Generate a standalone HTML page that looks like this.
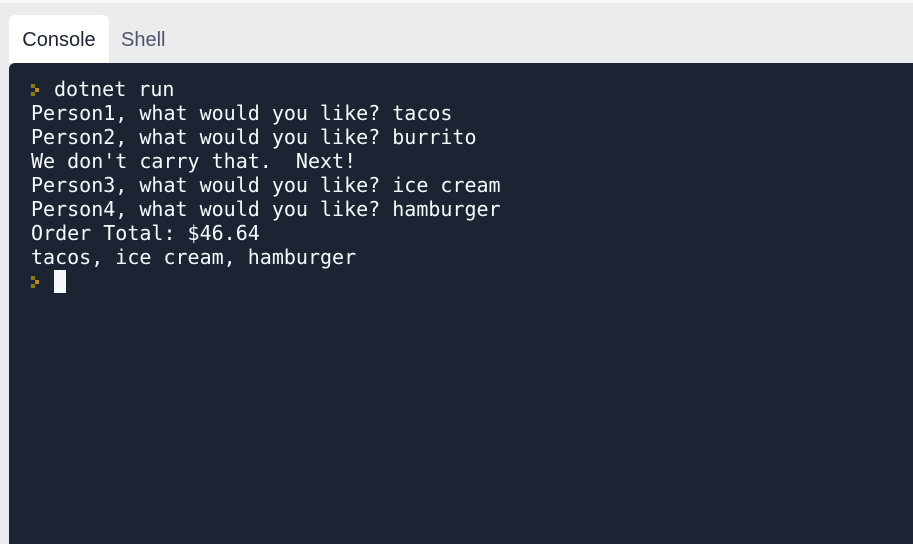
<!DOCTYPE html>
<html><head><style>
html,body{margin:0;padding:0;width:913px;height:544px;overflow:hidden;background:#ebecee;}
.top{position:absolute;left:0;top:0;width:913px;height:3px;background:#f5f6f7;}
.tab{position:absolute;top:15px;height:48px;font:20px "Liberation Sans",sans-serif;line-height:50px;}
.t1{left:9px;width:100px;background:#fff;border-radius:6px 6px 0 0;color:#1c2333;text-align:center;}
.t2{left:121px;color:#4e5569;}
.term{position:absolute;left:9px;top:63px;width:904px;height:481px;background:#1c2333;border-radius:6px 0 0 0;}
.txt{position:absolute;left:22px;top:14px;font:20px "DejaVu Sans Mono",monospace;color:#f5f9fc;}
.l{height:24px;line-height:24px;white-space:pre;}
.p{display:inline-block;width:23px;height:24px;vertical-align:top;position:relative;}
.p svg{position:absolute;left:0;top:7px;}
.cur{display:inline-block;width:12px;height:23px;background:#f5f9fc;vertical-align:top;margin-top:1px;}
</style></head><body>
<div class="top"></div>
<div class="tab t1">Console</div>
<div class="tab t2">Shell</div>
<div class="term"><div class="txt">
<div class="l"><span class="p"><svg width="9" height="12"><rect x="0" y="0" width="4" height="4" fill="#8a7a10"/><rect x="4" y="4" width="4" height="4" fill="#b0901a"/><rect x="0" y="8" width="4" height="4" fill="#8a7a10"/></svg></span>dotnet run</div>
<div class="l">Person1, what would you like? tacos</div>
<div class="l">Person2, what would you like? burrito</div>
<div class="l">We don't carry that.  Next!</div>
<div class="l">Person3, what would you like? ice cream</div>
<div class="l">Person4, what would you like? hamburger</div>
<div class="l">Order Total: $46.64</div>
<div class="l">tacos, ice cream, hamburger</div>
<div class="l"><span class="p"><svg width="9" height="12"><rect x="0" y="0" width="4" height="4" fill="#8a7a10"/><rect x="4" y="4" width="4" height="4" fill="#b0901a"/><rect x="0" y="8" width="4" height="4" fill="#8a7a10"/></svg></span><span class="cur"></span></div>
</div></div>
</body></html>
